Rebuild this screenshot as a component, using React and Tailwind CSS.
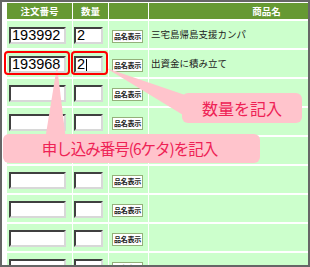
const rows = [
  { no: '193992', qty: '2', name: '三宅島帰島支援カンパ' },
  { no: '193968', qty: '2', name: '出資金に積み立て', caret: true },
  {}, {}, {}, {}, {}, {}, {},
];

const Field = ({ value, caret, className }) => (
  <div
    className={`h-[17px] bg-white border-2 border-t-[#404040] border-l-[#404040] border-r-[#d8d8d8] border-b-[#d8d8d8] flex items-center pl-px text-[14.5px] leading-none text-black font-['Liberation_Sans',sans-serif] ${className}`}
  >
    {value}
    {caret && <span className="ml-px w-px h-[12px] bg-black" />}
  </div>
);

export default function App() {
  return (
    <div className="relative w-[310px] h-[267px] border-2 border-[#666666] bg-white overflow-hidden font-['Noto_Sans_CJK_JP',sans-serif]">
      <div className="pl-[5px] pt-px">
        <div className="grid grid-cols-[65px_35px_39px_235px] gap-x-px gap-y-[2px] w-[377px]">
          {/* header */}
          <div className="h-[16px] bg-[#669933] text-white text-[9.5px] font-bold flex items-center justify-center">注文番号</div>
          <div className="h-[16px] bg-[#669933] text-white text-[9.5px] font-bold flex items-center justify-center">数量</div>
          <div className="h-[16px] bg-[#669933]" />
          <div className="h-[16px] bg-[#669933] text-white text-[9.5px] font-bold flex items-center justify-center">商品名</div>

          {rows.map((r, i) => (
            <div key={i} className="contents">
              <div className="h-[27px] bg-[#ccffcc] pt-[6px] pl-[2px]">
                <Field value={r.no} className="w-[57px]" />
              </div>
              <div className="h-[27px] bg-[#ccffcc] pt-[6px] pl-px">
                <Field value={r.qty} caret={r.caret} className="w-[29px]" />
              </div>
              <div className="h-[27px] bg-[#ccffcc] pt-[9px] pl-[3px]">
                <div className="w-[31px] h-[13px] bg-white border border-[#94b07a] flex items-center justify-center text-[7px] font-bold text-[#222] leading-none tracking-[-0.3px]">
                  品名表示
                </div>
              </div>
              <div className="h-[27px] bg-[#ccffcc] flex items-center pl-[2px] text-[9.5px] text-[#222]">
                {r.name}
              </div>
            </div>
          ))}
        </div>
      </div>

      {/* callout pointers */}
      <svg className="absolute left-[-2px] top-[-2px]" width="310" height="267">
        <polygon points="106,68 188,96 188,118" fill="#ffc4cc" />
        <polygon points="57,66 45,140 66,140" fill="#ffc4cc" />
      </svg>

      {/* callouts */}
      <div className="absolute left-[180px] top-[91px] w-[120px] h-[30px] rounded-[6px] bg-[#ffc4cc] flex items-center justify-center text-[16px] text-[#ee2255] leading-none">
        数量を記入
      </div>
      <div className="absolute left-[1px] top-[132px] w-[257px] h-[29px] rounded-[6px] bg-[#ffc4cc] flex items-center justify-center pr-[4px] text-[15.5px] tracking-[-1px] text-[#ee2255] leading-none">
        申し込み番号(6ケタ)を記入
      </div>

      {/* highlight boxes */}
      <div className="absolute left-[2px] top-[49px] w-[66px] h-[24px] border-2 border-[#ff0000] rounded-[4px]" />
      <div className="absolute left-[69px] top-[49px] w-[37px] h-[24px] border-2 border-[#ff0000] rounded-[4px]" />
    </div>
  );
}
